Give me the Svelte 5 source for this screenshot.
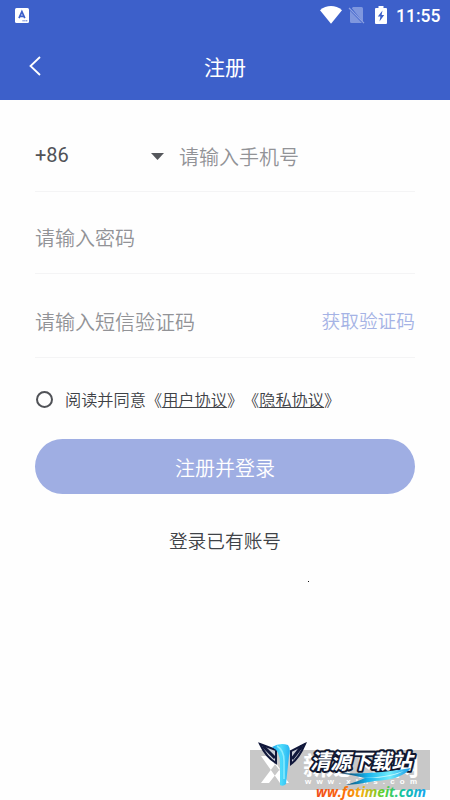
<script>
	let phone = $state('');
	let password = $state('');
	let code = $state('');
	let agreed = $state(false);
</script>

<div class="screen">
	<header>
		<div class="status">
			<svg class="app-icon" width="14" height="15" viewBox="0 0 14 15">
				<rect width="14" height="15" rx="1.5" fill="#fff" />
				<path d="M4 10.2 6.9 3.7 9.8 10.2M5 8.3h3.8" fill="none" stroke="#3d60ca" stroke-width="1.7" />
				<path d="M7.5 12.8h5" stroke="#3d60ca" stroke-dasharray="1.2 .6" />
			</svg>
			<div class="indicators">
				<svg width="22" height="18" viewBox="0 0 22 18">
					<path d="M0 4.2C6.5-1.3 15.5-1.3 22 4.2L11 17.8Z" fill="#fff" />
				</svg>
				<svg class="sim" width="17" height="18" viewBox="0 0 17 18">
					<path d="M5 1h8.5q1.5 0 1.5 1.5v13.500L3.800 2.200zM2 4.700 14 17H3.500Q2 17 2 15.500z" fill="#7f97de" />
					<path d="M1 2 16 17.2" stroke="#8da2e2" stroke-width="1.2" />
				</svg>
				<svg class="battery" width="12" height="18" viewBox="0 0 12 18">
					<path d="M3.5 0h5v2H11q1 0 1 1v14q0 1-1 1H1q-1 0-1-1V3q0-1 1-1h2.500z" fill="#fff" />
					<path d="M7.500 4.500 2.800 10.500h2.600L4.500 15.500 9.200 9H6.600z" fill="#3d60ca" />
				</svg>
				<span class="time">11:55</span>
			</div>
		</div>
		<div class="nav">
			<button class="back" aria-label="返回">
				<svg width="12" height="20" viewBox="0 0 12 20">
					<path d="M11 1 1.5 10 11 19" fill="none" stroke="#fff" stroke-width="1.8" />
				</svg>
			</button>
			<h1>注册</h1>
		</div>
	</header>

	<main>
		<div class="field first">
			<div class="country">
				<span>+86</span>
				<svg width="13" height="7" viewBox="0 0 13 7"><path d="M0 0h13L6.500 7z" fill="#55575c" /></svg>
			</div>
			<input type="tel" placeholder="请输入手机号" bind:value={phone} />
		</div>
		<div class="field second">
			<input type="password" placeholder="请输入密码" bind:value={password} />
		</div>
		<div class="field third">
			<input placeholder="请输入短信验证码" bind:value={code} />
			<button class="get-code">获取验证码</button>
		</div>

		<div class="agree">
			<button class="radio" class:agreed aria-label="同意" onclick={() => (agreed = !agreed)}></button>
			<span>阅读并同意《<u>用户协议</u>》《<u>隐私协议</u>》</span>
		</div>

		<button class="submit">注册并登录</button>
		<button class="login">登录已有账号</button>
	</main>

	<i class="dot"></i>

	<svg class="watermark" width="200" height="64" viewBox="250 736 200 64">
		<defs>
			<linearGradient id="rainbow" x1="0" x2="1">
				<stop offset="0" stop-color="#f04a1c" />
				<stop offset=".25" stop-color="#fb6a0c" />
				<stop offset=".42" stop-color="#f3b012" />
				<stop offset=".6" stop-color="#5fd02c" />
				<stop offset=".78" stop-color="#16c39a" />
				<stop offset="1" stop-color="#16a4f0" />
			</linearGradient>
			<linearGradient id="beam" x1="0" x2="1">
				<stop offset="0" stop-color="#1aa6ee" />
				<stop offset=".5" stop-color="#4fdcfb" />
				<stop offset="1" stop-color="#26b4f2" />
			</linearGradient>
			<linearGradient id="stream" x1="0" x2="1">
				<stop offset="0" stop-color="#0a2a4a" />
				<stop offset=".4" stop-color="#16b4ee" />
				<stop offset=".7" stop-color="#6fecfb" />
				<stop offset="1" stop-color="#1596e5" />
			</linearGradient>
		</defs>
		<rect x="250" y="750" width="180" height="40" fill="#c8c8c8" />
		<path d="M261 756h8l20 27h-9zM276 763l-15 20h8l11-14z" fill="#fff" />
		<text class="under" x="303" y="775" textLength="116">新龙下载网</text>
		<text class="under-url" x="305" y="784" textLength="112">www.xlhs.com</text>

		<!-- wings and the beam between them -->
		<path d="M260 744 276 750V763Q266 757 260 744z" fill="#c9ccd6" stroke="#10173a" stroke-width="2" />
		<path d="M305 744 291 751V764Q299 758 305 744z" fill="#c9ccd6" stroke="#10173a" stroke-width="2" />
		<path d="M263 746 275 758M302 746 292 759" fill="none" stroke="#10173a" stroke-width="3" />
		<path d="M272 747q8-5 16-2 3 4 1 11l-3 28q-3 3-6 1V763q0-12-8-16z" fill="url(#beam)" />
		<path d="M277 746q7 4 7 15v18" fill="none" stroke="#8cecfd" stroke-width="1.5" />

		<text class="brand" x="310" y="769" textLength="102">清源下载站</text>
		<path d="M339 773q34 2 72-5-10 12-36 13-14 3-29 4 13-4 19-7-12-3-26-5z" fill="url(#stream)" />
		<path d="M362 778q22 0 42-7-14 8-42 7z" fill="#c3f6fc" />
		<text class="url" x="316" y="797" textLength="110" lengthAdjust="spacingAndGlyphs">ww.fotimeit.com</text>
	</svg>
</div>

<style>
	:global(body) {
		margin: 0;
	}
	.screen {
		position: relative;
		width: 450px;
		height: 800px;
		overflow: hidden;
		background: #fefefe;
		font-family: Roboto, 'Noto Sans CJK SC', sans-serif;
		font-weight: 350;
	}
	button,
	input {
		padding: 0;
		border: 0;
		background: none;
		font: inherit;
		outline: none;
	}
	svg {
		display: block;
	}

	header {
		height: 100px;
		background: #3d60ca;
		color: #fff;
	}
	.status {
		display: flex;
		justify-content: space-between;
		align-items: center;
		height: 31px;
		padding: 0 10px 0 15px;
	}
	.indicators {
		display: flex;
		align-items: center;
		margin-top: -2px;
	}
	.sim {
		margin-left: 6px;
	}
	.battery {
		margin-left: 10px;
	}
	.time {
		width: 44px;
		margin: 2px 0 0 9px;
		font-size: 17.5px;
		font-weight: 500;
		white-space: nowrap;
	}
	.nav {
		display: grid;
		grid-template-columns: 60px 1fr 60px;
		align-items: center;
		height: 69px;
	}
	.back {
		padding-left: 29px;
	}
	h1 {
		margin: 4px 0 0;
		font-size: 21px;
		font-weight: 400;
		line-height: 30px;
		text-align: center;
	}

	main {
		display: flex;
		flex-direction: column;
		padding: 0 35px;
	}
	.field {
		display: flex;
		align-items: center;
		box-sizing: border-box;
		border-bottom: 1px solid #f4f4f5;
		font-size: 20px;
	}
	.first {
		height: 92px;
		padding-top: 21px;
	}
	.second {
		height: 82px;
		padding-top: 13px;
	}
	.third {
		height: 84px;
		padding-top: 14px;
	}
	.country {
		display: flex;
		align-items: center;
		justify-content: space-between;
		width: 129px;
		margin-right: 15px;
		color: #505257;
		font-weight: 400;
	}
	.country span {
		margin-top: -2px;
	}
	input {
		flex: 1;
		min-width: 0;
		height: 30px;
		color: #505257;
	}
	.first input {
		padding-top: 3px;
	}
	input::placeholder {
		color: #929397;
		opacity: 1;
	}
	.get-code {
		margin-top: -6px;
		color: #a5b3e5;
		font-size: 18.7px;
	}

	.agree {
		display: flex;
		align-items: center;
		height: 24px;
		margin-top: 30px;
		color: #3f4247;
		font-size: 16.2px;
		text-spacing-trim: space-all;
	}
	.agree span {
		margin-top: -2px;
		white-space: nowrap;
	}
	.agree u {
		text-decoration-thickness: 1px;
		text-underline-offset: 1px;
	}
	.radio {
		box-sizing: border-box;
		width: 17px;
		height: 17px;
		margin: -2px 12px 0 1px;
		border: 2px solid #505257;
		border-radius: 50%;
	}
	.agreed {
		background: #3d60ca;
	}
	.submit {
		height: 55px;
		margin-top: 27px;
		padding-top: 2px;
		border-radius: 28px;
		background: #9faee3;
		color: #fff;
		font-size: 20px;
	}
	.login {
		align-self: center;
		height: 30px;
		margin-top: 30px;
		color: #3f4247;
		font-size: 18.7px;
	}

	.dot {
		position: absolute;
		left: 308px;
		top: 581px;
		width: 1px;
		height: 1px;
		background: #111;
	}
	.watermark {
		position: absolute;
		left: 250px;
		top: 736px;
	}
	.under {
		fill: #fff;
		font-size: 25px;
		font-weight: 700;
	}
	.under-url {
		fill: #fff;
		font: 700 8px 'Liberation Sans', sans-serif;
	}
	.brand {
		fill: #fff;
		stroke: #10172f;
		stroke-width: 4px;
		stroke-linejoin: round;
		paint-order: stroke;
		font-size: 21px;
		font-style: italic;
		font-weight: 700;
	}
	.url {
		fill: url(#rainbow);
		font: italic 700 15px 'Open Sans', sans-serif;
	}
</style>
